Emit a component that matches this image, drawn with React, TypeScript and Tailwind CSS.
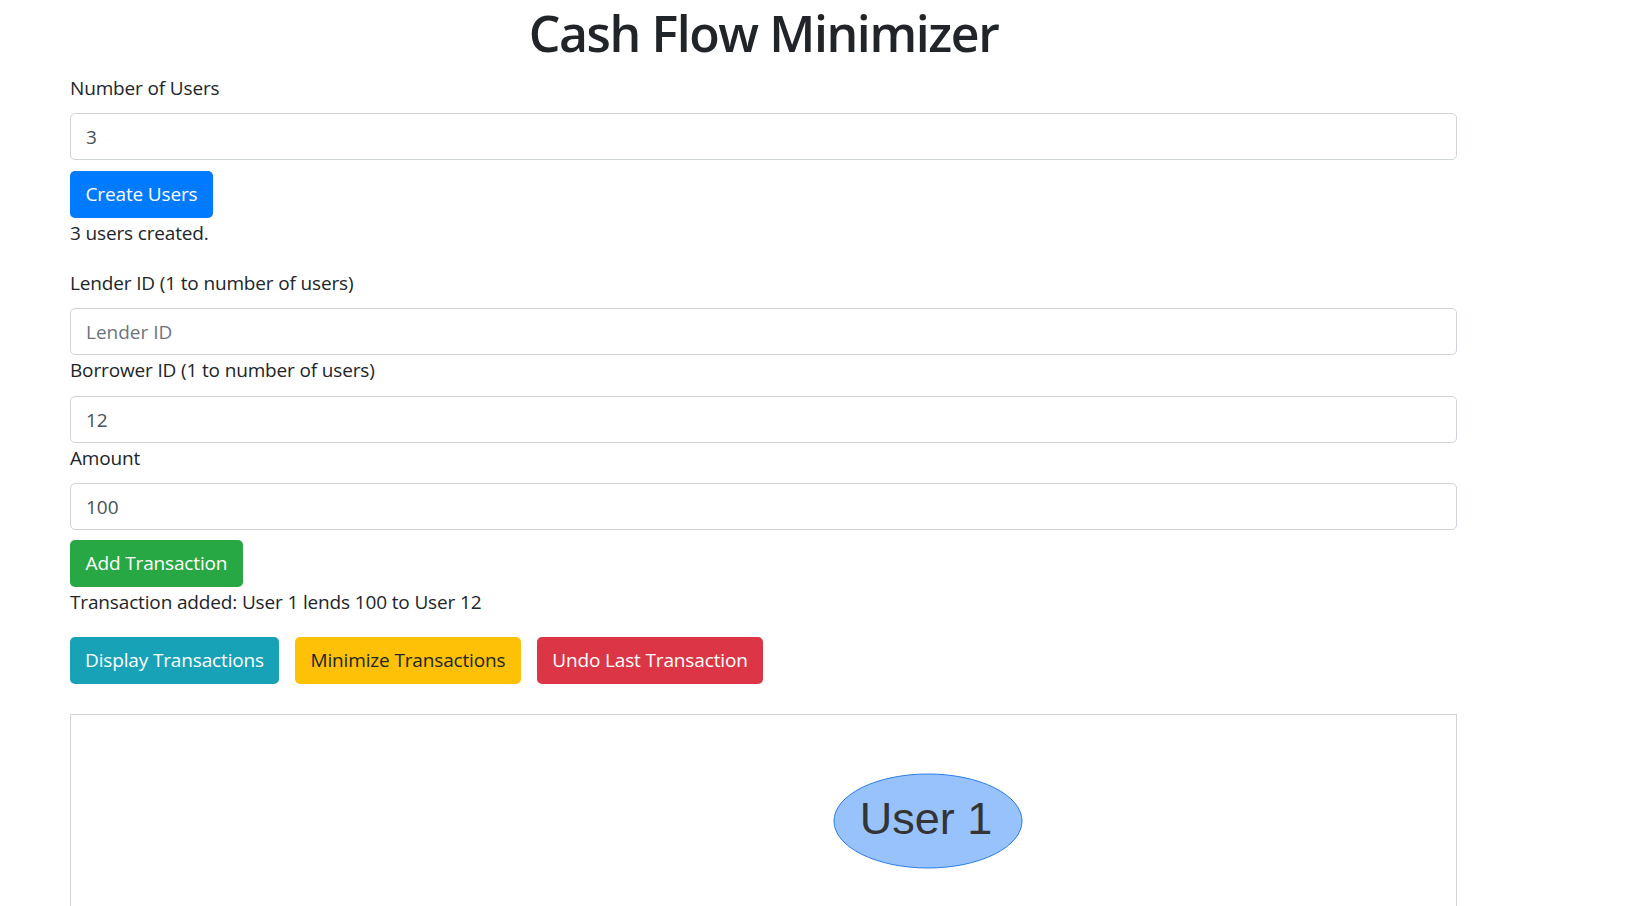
import React from 'react';

const font = { fontFamily: '"Open Sans", "Noto Sans", sans-serif' };

function Field({ label, value, placeholder, top, gap }: { label: string; value?: string; placeholder?: string; top?: string; gap: string }) {
  return (
    <>
      <label className={`block text-[19px] leading-[30px] tracking-[-0.15px] text-[#212529] ${top ?? ''}`}>{label}</label>
      <input
        readOnly
        value={value ?? ''}
        placeholder={placeholder}
        className={`${gap} block h-[47px] w-full rounded-[5px] border border-[#ced4da] bg-white px-[15px] text-[19px] text-[#495057] outline-none placeholder:text-[#6c757d]`}
      />
    </>
  );
}

export default function App() {
  return (
    <div className="min-h-screen overflow-hidden bg-white text-[#212529]" style={font}>
      <div className="ml-[70px] w-[1387px]">
        <h1 className="mt-[3px] text-center text-[50px] font-semibold leading-[60px] tracking-[-1.4px]">Cash Flow Minimizer</h1>

        <Field label="Number of Users" value="3" top="mt-[10px]" gap="mt-[10px]" />
        <button className="mt-[11px] flex h-[47px] w-[143px] items-center justify-center rounded-[5px] bg-[#007bff] text-[19px] tracking-[-0.15px] text-white">
          Create Users
        </button>
        <p className="text-[19px] leading-[30px] tracking-[-0.15px]">3 users created.</p>

        <Field label="Lender ID (1 to number of users)" placeholder="Lender ID" top="mt-[20px]" gap="mt-[10px]" />
        <Field label="Borrower ID (1 to number of users)" value="12" gap="mt-[11px]" />
        <Field label="Amount" value="100" gap="mt-[10px]" />

        <button className="mt-[10px] flex h-[47px] w-[173px] items-center justify-center rounded-[5px] bg-[#28a745] text-[19px] tracking-[-0.15px] text-white">
          Add Transaction
        </button>
        <p className="text-[19px] leading-[30px] tracking-[-0.15px]">Transaction added: User 1 lends 100 to User 12</p>

        <div className="mt-[20px] flex gap-[16px] text-[19px] tracking-[-0.15px]">
          <button className="flex h-[47px] w-[209px] items-center justify-center rounded-[5px] bg-[#17a2b8] text-white">
            Display Transactions
          </button>
          <button className="flex h-[47px] w-[226px] items-center justify-center rounded-[5px] bg-[#ffc107] text-[#212529]">
            Minimize Transactions
          </button>
          <button className="flex h-[47px] w-[226px] items-center justify-center rounded-[5px] bg-[#dc3545] text-white">
            Undo Last Transaction
          </button>
        </div>

        <div className="relative mt-[30px] h-[500px] w-full border border-[#d3d3d3] bg-white">
          <svg className="absolute left-0 top-0" width="1385" height="498">
            <ellipse cx="857" cy="106" rx="94" ry="47" fill="#97C2FC" stroke="#2B7CE9" strokeWidth="1" />
            <text
              x="855"
              y="119"
              textAnchor="middle"
              fontSize="45"
              fill="#343434"
              fontFamily='"Liberation Sans", Arial, sans-serif'
            >
              User 1
            </text>
          </svg>
        </div>
      </div>
    </div>
  );
}
